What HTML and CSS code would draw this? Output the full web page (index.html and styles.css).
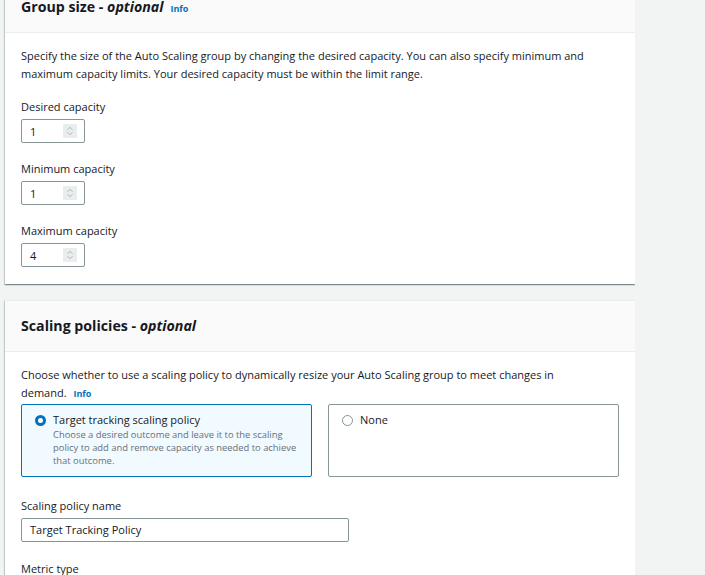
FILE: index.html
```html
<!DOCTYPE html>
<html>
<head>
<meta charset="utf-8">
<link rel="stylesheet" href="styles.css">
</head>
<body>
<div class="page">
  <section class="card card-first">
    <div class="card-header">
      <h2 class="title">Group size - <em>optional</em></h2>
      <a class="info">Info</a>
    </div>
    <div class="card-body">
      <p class="desc">Specify the size of the Auto Scaling group by changing the desired capacity. You can also specify minimum and maximum capacity limits. Your desired capacity must be within the limit range.</p>
      <div class="fields">
        <div class="field">
          <div class="label">Desired capacity</div>
          <div class="num-input"><span class="val">1</span><span class="spin"><svg width="8" height="10" viewBox="0 0 8 10"><path d="M1.5 3.8 L4 1.3 L6.5 3.8 M1.5 6.2 L4 8.7 L6.5 6.2" fill="none" stroke="#aab7b8" stroke-width="1"/></svg></span></div>
        </div>
        <div class="field">
          <div class="label">Minimum capacity</div>
          <div class="num-input"><span class="val">1</span><span class="spin"><svg width="8" height="10" viewBox="0 0 8 10"><path d="M1.5 3.8 L4 1.3 L6.5 3.8 M1.5 6.2 L4 8.7 L6.5 6.2" fill="none" stroke="#aab7b8" stroke-width="1"/></svg></span></div>
        </div>
        <div class="field">
          <div class="label">Maximum capacity</div>
          <div class="num-input"><span class="val">4</span><span class="spin"><svg width="8" height="10" viewBox="0 0 8 10"><path d="M1.5 3.8 L4 1.3 L6.5 3.8 M1.5 6.2 L4 8.7 L6.5 6.2" fill="none" stroke="#aab7b8" stroke-width="1"/></svg></span></div>
        </div>
      </div>
    </div>
  </section>

  <section class="card">
    <div class="card-header">
      <h2 class="title">Scaling policies - <em>optional</em></h2>
    </div>
    <div class="card-body">
      <p class="desc">Choose whether to use a scaling policy to dynamically resize your Auto Scaling group to meet changes in demand. <a class="info inline">Info</a></p>
      <div class="tiles">
        <div class="tile selected">
          <span class="radio checked"></span>
          <div class="tile-text">
            <div class="tile-title">Target tracking scaling policy</div>
            <div class="tile-desc">Choose a desired outcome and leave it to the scaling policy to add and remove capacity as needed to achieve that outcome.</div>
          </div>
        </div>
        <div class="tile">
          <span class="radio"></span>
          <div class="tile-text">
            <div class="tile-title">None</div>
          </div>
        </div>
      </div>
      <div class="field field-name">
        <div class="label">Scaling policy name</div>
        <div class="text-input">Target Tracking Policy</div>
      </div>
      <div class="field field-metric">
        <div class="label">Metric type</div>
      </div>
    </div>
  </section>
</div>
</body>
</html>
```
FILE: styles.css
```css
html, body {
  margin: 0;
  padding: 0;
  background: #f2f3f3;
  font-family: "Open Sans", "Noto Sans", sans-serif;
  color: #16191f;
  font-size: 11px;
}
.page {
  padding-left: 5px;
  width: 630px;
  height: 575px;
  overflow: hidden;
}
.card {
  background: #fff;
  border-top: 1px solid #eaeded;
  box-shadow: 0 1px 1px 0 rgba(0,28,36,.3), 1px 1px 1px 0 rgba(0,28,36,.15), -1px 1px 1px 0 rgba(0,28,36,.15);
  margin-bottom: 16px;
}
.card-first {
  margin-top: -19px;
}
.card-header {
  background: #fafafa;
  border-bottom: 1px solid #eaeded;
  padding: 15px 16px;
  display: flex;
  align-items: baseline;
  gap: 7px;
}
.title {
  margin: 0;
  font-size: 14.2px;
  line-height: 20px;
  font-weight: 700;
}
.title em {
  font-style: italic;
}
.info {
  color: #0073bb;
  font-weight: 700;
  font-size: 9px;
  line-height: 12px;
}
.info.inline {
  margin-left: 4px;
}
.card-body {
  padding: 14px 16px 17px;
}
.desc {
  margin: 0;
  line-height: 18px;
  max-width: 568px;
}
.fields {
  margin-top: 16px;
  display: flex;
  flex-direction: column;
  gap: 18px;
}
.label {
  line-height: 16px;
  margin-bottom: 4px;
}
.num-input {
  box-sizing: border-box;
  width: 64px;
  height: 24px;
  border: 1px solid #879596;
  border-radius: 2px;
  display: flex;
  align-items: center;
  justify-content: space-between;
  padding: 0 7px 0 8px;
}
.spin {
  width: 14px;
  height: 14px;
  background: #eaeded;
  display: flex;
  align-items: center;
  justify-content: center;
}
.spin svg {
  display: block;
}
.tiles {
  margin-top: 2px;
  display: flex;
  gap: 16px;
}
.tile {
  flex: 1;
  box-sizing: border-box;
  height: 73px;
  border: 1px solid #879596;
  border-radius: 2px;
  padding: 7px 13px;
  display: flex;
  gap: 7px;
  align-items: flex-start;
}
.tile.selected {
  background: #f1faff;
  border-color: #0073bb;
}
.radio {
  flex: none;
  box-sizing: border-box;
  width: 11px;
  height: 11px;
  border-radius: 50%;
  border: 1px solid #879596;
  margin-top: 2.5px;
  background: #fff;
}
.radio.checked {
  border: 3.5px solid #0073bb;
}
.tile-title {
  line-height: 16px;
}
.tile-desc {
  color: #687078;
  font-size: 9.4px;
  line-height: 13px;
}
.field-name {
  margin-top: 21px;
}
.text-input {
  box-sizing: border-box;
  width: 328px;
  height: 24px;
  border: 1px solid #879596;
  border-radius: 2px;
  padding: 0 8px;
  line-height: 22px;
}
.field-metric {
  margin-top: 19px;
}
```
